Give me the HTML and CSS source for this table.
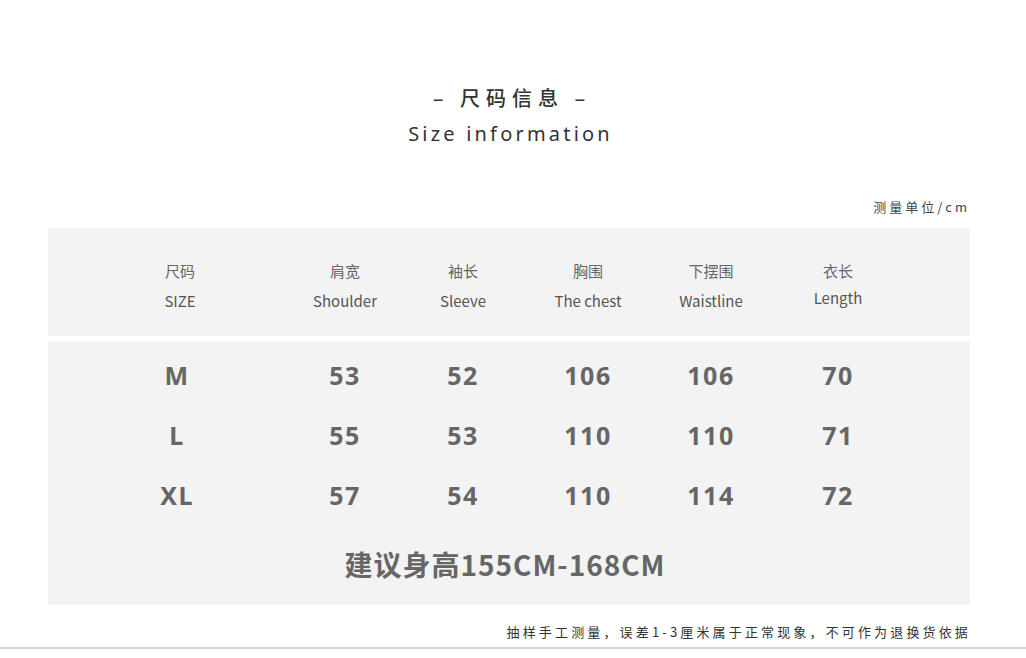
FILE: index.html
```html
<!DOCTYPE html>
<html lang="zh">
<head>
<meta charset="utf-8">
<title>尺码信息</title>
<link rel="stylesheet" href="styles.css">
</head>
<body>
<div class="page">
  <header class="heading">
    <div class="heading-cn">– 尺码信息 –</div>
    <div class="heading-en">Size information</div>
  </header>
  <div class="unit">测量单位/cm</div>
  <section class="chart">
    <div class="chart-head">
      <div class="hcell"><span class="cn">尺码</span><span class="en">SIZE</span></div>
      <div class="hcell"><span class="cn">肩宽</span><span class="en">Shoulder</span></div>
      <div class="hcell"><span class="cn">袖长</span><span class="en">Sleeve</span></div>
      <div class="hcell"><span class="cn">胸围</span><span class="en">The chest</span></div>
      <div class="hcell"><span class="cn">下摆围</span><span class="en">Waistline</span></div>
      <div class="hcell"><span class="cn">衣长</span><span class="en lift">Length</span></div>
    </div>
    <div class="chart-body">
      <div class="row">
        <div class="cell">M</div><div class="cell">53</div><div class="cell">52</div><div class="cell">106</div><div class="cell">106</div><div class="cell">70</div>
      </div>
      <div class="row">
        <div class="cell">L</div><div class="cell">55</div><div class="cell">53</div><div class="cell">110</div><div class="cell">110</div><div class="cell">71</div>
      </div>
      <div class="row">
        <div class="cell">XL</div><div class="cell">57</div><div class="cell">54</div><div class="cell">110</div><div class="cell">114</div><div class="cell">72</div>
      </div>
      <div class="advice">建议身高155CM-168CM</div>
    </div>
  </section>
  <div class="note">抽样手工测量，误差1-3厘米属于正常现象，不可作为退换货依据</div>
  <div class="rule"></div>
</div>
</body>
</html>
```

FILE: styles.css
```css
* { box-sizing: border-box; }
html, body { margin: 0; padding: 0; background: #ffffff; }
body {
  font-family: "Noto Sans", "Noto Sans CJK SC", sans-serif;
  color: #555;
  width: 1026px;
  height: 658px;
  overflow: hidden;
}
.page {
  display: flex;
  flex-direction: column;
  padding-top: 86px;
}
.heading {
  display: flex;
  flex-direction: column;
  align-items: center;
  gap: 12px;
}
.heading-cn {
  font-family: "Noto Sans CJK SC", sans-serif;
  font-size: 20px;
  line-height: 24px;
  font-weight: 500;
  letter-spacing: 6px;
  color: #333;
  padding-right: 2px;
}
.heading-en {
  font-family: "Noto Sans", "Noto Sans CJK SC", sans-serif;
  font-size: 20px;
  line-height: 24px;
  letter-spacing: 3.2px;
  color: #333;
  padding-right: 5px;
}
.unit {
  align-self: flex-end;
  margin-top: 52px;
  margin-right: 56px;
  font-family: "Noto Sans CJK SC", sans-serif;
  font-size: 13px;
  line-height: 18px;
  letter-spacing: 3px;
  color: #444;
}
.chart {
  margin: 12px 56px 0 48px;
  display: flex;
  flex-direction: column;
  gap: 5px;
}
.chart-head, .row {
  display: grid;
  grid-template-columns: 176px 154px 82px 168px 78px 176px;
  padding-left: 44px;
}
.chart-head {
  background: #f3f3f3;
  height: 108px;
  padding-top: 28px;
}
.hcell {
  display: flex;
  flex-direction: column;
  align-items: center;
  font-family: "Noto Sans CJK SC", sans-serif;
  white-space: nowrap;
}
.hcell .cn {
  font-size: 15px;
  line-height: 30px;
  color: #666;
}
.hcell .en {
  font-size: 15px;
  line-height: 30px;
  color: #555;
}
.hcell .en.lift { margin-top: -3px; }
.chart-body {
  background: #f3f3f3;
  padding: 4px 0 21px;
  display: flex;
  flex-direction: column;
}
.row { height: 60px; align-items: center; }
.cell {
  text-align: center;
  font-family: "Noto Sans", sans-serif;
  font-weight: 700;
  font-size: 25px;
  letter-spacing: 1.5px;
  color: #666;
  line-height: 60px;
}
.row .cell:first-child { padding-right: 6px; }
.advice {
  margin-top: 19px;
  text-align: center;
  font-family: "Noto Sans CJK SC", sans-serif;
  font-weight: 700;
  font-size: 28px;
  line-height: 40px;
  letter-spacing: 1px;
  color: #666;
  padding-right: 8px;
}
.note {
  align-self: flex-end;
  margin-top: 18px;
  margin-right: 55px;
  font-family: "Noto Sans CJK SC", sans-serif;
  font-size: 13px;
  line-height: 18px;
  letter-spacing: 3.15px;
  color: #333;
}
.rule {
  margin-top: 6px;
  height: 2px;
  background: #d4d4d4;
}
```
